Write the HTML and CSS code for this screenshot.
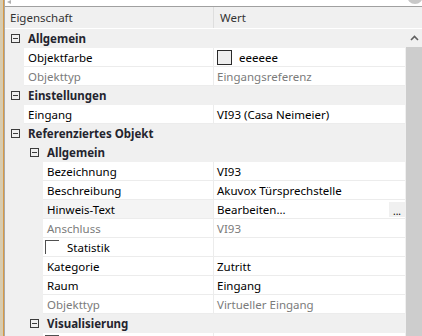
FILE: index.html
```html
<!DOCTYPE html>
<html>
<head>
<meta charset="utf-8">
<link rel="stylesheet" href="styles.css">
</head>
<body>
<div class="screen">
  <div class="desk"></div>
  <div class="panel">
    <div class="top">
      <span class="tri"></span>
      <span class="knob"></span>
    </div>
    <div class="header">
      <div class="hname">Eigenschaft</div>
      <div class="hval">Wert</div>
    </div>
    <div class="body">
      <div class="grid">
        <div class="row cat"><span class="exp"></span><span class="ctext">Allgemein</span></div>
        <div class="row prop l1"><div class="name">Objektfarbe</div><div class="val"><span class="swatch"></span><span class="swtext">eeeeee</span></div></div>
        <div class="row prop l1 dis"><div class="name">Objekttyp</div><div class="val">Eingangsreferenz</div></div>
        <div class="row cat"><span class="exp"></span><span class="ctext">Einstellungen</span></div>
        <div class="row prop l1"><div class="name">Eingang</div><div class="val">VI93 (Casa Neimeier)</div></div>
        <div class="row cat"><span class="exp"></span><span class="ctext">Referenziertes Objekt</span></div>
        <div class="row cat c1"><span class="exp"></span><span class="ctext">Allgemein</span></div>
        <div class="row prop l2"><div class="name">Bezeichnung</div><div class="val">VI93</div></div>
        <div class="row prop l2"><div class="name">Beschreibung</div><div class="val">Akuvox Türsprechstelle</div></div>
        <div class="row prop l2 sel"><div class="name">Hinweis-Text</div><div class="val btnval"><span class="vtext">Bearbeiten...</span><span class="dots">...</span></div></div>
        <div class="row prop l2 dis"><div class="name">Anschluss</div><div class="val">VI93</div></div>
        <div class="row prop l2"><div class="name chk"><span class="box"></span><span>Statistik</span></div><div class="val"></div></div>
        <div class="row prop l2"><div class="name">Kategorie</div><div class="val">Zutritt</div></div>
        <div class="row prop l2"><div class="name">Raum</div><div class="val">Eingang</div></div>
        <div class="row prop l2 dis"><div class="name">Objekttyp</div><div class="val">Virtueller Eingang</div></div>
        <div class="row cat c1"><span class="exp"></span><span class="ctext">Visualisierung</span></div>
        <div class="row prop l2"><div class="name chk"><span class="box"></span><span></span></div><div class="val"></div></div>
      </div>
      <div class="scroll">
        <div class="arrow">
          <svg width="17" height="18" viewBox="0 0 17 18"><polyline points="5,11 8.5,7.5 12,11" fill="none" stroke="#606060" stroke-width="1.6"/></svg>
        </div>
        <div class="thumb"></div>
      </div>
    </div>
  </div>
</div>
</body>
</html>
```
FILE: styles.css
```css
html, body {
  margin: 0;
  padding: 0;
  background: #ffffff;
}
body {
  width: 422px;
  height: 336px;
  overflow: hidden;
  font-family: "Noto Sans", "Open Sans", sans-serif;
  font-size: 11.5px;
  color: #000;
}
.screen {
  display: flex;
  height: 336px;
}
.desk {
  width: 4px;
  flex: none;
  background: linear-gradient(to right, #d8ccb0 0, #d8ccb0 3px, #d99a45 3px, #d99a45 4px);
  border-right: 1px solid #a8a8a8;
}
.panel {
  flex: 1;
  display: flex;
  flex-direction: column;
  min-width: 0;
}
.top {
  height: 6px;
  border-bottom: 1px solid #a0a0a0;
  display: flex;
  justify-content: space-between;
  overflow: hidden;
  background: #fff;
}
.tri {
  width: 0;
  height: 0;
  margin-left: 2px;
  border-top: 2px solid transparent;
  border-bottom: 2px solid transparent;
  border-right: 4px solid #b0b0b0;
}
.knob {
  width: 16px;
  height: 16px;
  border-radius: 50%;
  background: #c8c8c8;
  margin-top: -12px;
  margin-right: -1px;
}
.header {
  height: 21px;
  background: #f0f0f0;
  display: flex;
  align-items: center;
  border-bottom: 1px solid #fff;
  color: #333;
}
.hname {
  width: 203px;
  padding-left: 5px;
  height: 21px;
  line-height: 21px;
}
.hval {
  border-left: 1px solid #dedede;
  padding-left: 6px;
  height: 21px;
  line-height: 21px;
}
.body {
  flex: 1;
  display: flex;
  min-height: 0;
}
.grid {
  width: 400px;
  flex: none;
  background: #f0f0f0;
}
.row {
  height: 18px;
  border-bottom: 1px solid #f0f0f0;
  display: flex;
  align-items: center;
}
.cat {
  background: #f0f0f0;
}
.exp {
  width: 7px;
  height: 7px;
  border: 1px solid #3c3c3c;
  margin-left: 6px;
  position: relative;
  flex: none;
  background: #f0f0f0;
}
.exp::after {
  content: "";
  position: absolute;
  left: 1px;
  top: 3px;
  width: 5px;
  height: 1px;
  background: #3c3c3c;
}
.c1 .exp {
  margin-left: 25px;
}
.ctext {
  font-weight: 700;
  color: #24242e;
  margin-left: 8px;
}
.prop {
  background: #f0f0f0;
  border-bottom: none;
  height: 19px;
  align-items: stretch;
}
.prop .name, .prop .val {
  background: #fff;
  border-bottom: 1px solid #ececec;
  display: flex;
  align-items: center;
  white-space: nowrap;
  overflow: hidden;
}
.l1 .name {
  margin-left: 19px;
  width: 185px;
  padding-left: 4px;
}
.l2 .name {
  margin-left: 38px;
  width: 166px;
  padding-left: 4px;
}
.prop .val {
  flex: 1;
  border-left: 1px solid #ececec;
  padding-left: 3px;
}
.dis .name, .dis .val {
  color: #7b7b7b;
}
.sel .name {
  background: #f4f4f4;
}
.swatch {
  width: 13px;
  height: 13px;
  border: 1px solid #2a2a2a;
  background: #eeeeee;
  flex: none;
}
.swtext {
  margin-left: 7px;
}
.btnval {
  padding-right: 0;
}
.vtext {
  flex: 1;
}
.dots {
  width: 16px;
  height: 15px;
  background: #f0f0f0;
  display: flex;
  justify-content: center;
  align-items: flex-end;
  line-height: 12px;
  font-size: 10px;
  margin-right: 0;
}
.chk {
  gap: 8px;
}
.box {
  width: 13px;
  height: 13px;
  border-top: 1px solid #505050;
  border-left: 1px solid #505050;
  flex: none;
  margin-left: -2px;
}
.scroll {
  width: 17px;
  flex: none;
  display: flex;
  flex-direction: column;
  background: #f0f0f0;
}
.arrow {
  height: 18px;
  flex: none;
  margin-left: 1px;
  background: #f0f0f0;
}
.arrow svg {
  display: block;
}
.thumb {
  flex: 1;
  margin-left: 1px;
  background: #cdcdcd;
}
```
